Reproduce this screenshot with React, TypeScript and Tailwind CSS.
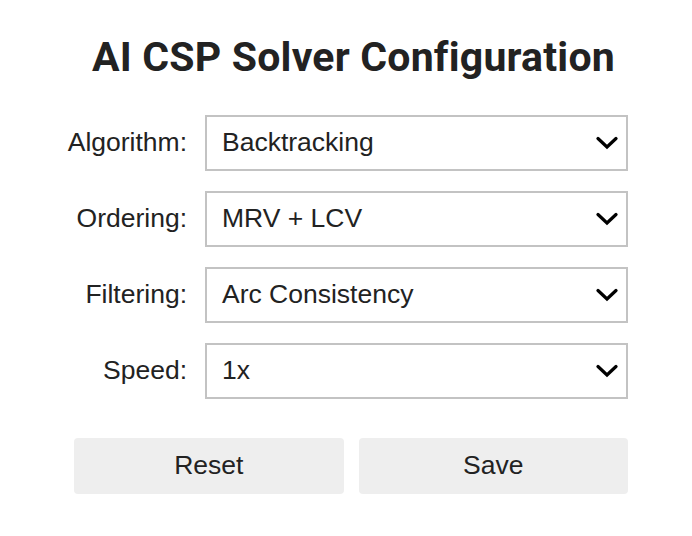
const fields = [
    { label: "Algorithm:", value: "Backtracking" },
    { label: "Ordering:", value: "MRV + LCV" },
    { label: "Filtering:", value: "Arc Consistency" },
    { label: "Speed:", value: "1x" },
];

function Chevron() {
    return (
        <svg width="22" height="14" viewBox="0 0 22 14" fill="none">
            <polyline points="2,2.5 11,11 20,2.5" stroke="#000" strokeWidth="3.2" strokeLinecap="round" strokeLinejoin="miter" />
        </svg>
    );
}

function SelectBox({ value }: { value: string }) {
    return (
        <div className="flex h-[56px] flex-1 items-center justify-between border-2 border-[#c3c3c3] bg-white pl-[15px] pr-[8px]">
            <span>{value}</span>
            <Chevron />
        </div>
    );
}

export default function App() {
    return (
        <div className="h-[536px] w-[692px] bg-white font-['Liberation_Sans',Arial,sans-serif] text-[#222]">
            <div className="ml-[63px] w-[565px] pt-[31px]">
                <h1 className="ml-[29px] font-['Roboto',sans-serif] text-[41px] leading-[52px] font-bold tracking-[0.2px] text-[#222]">
                    AI CSP Solver Configuration
                </h1>
                <div className="mt-[32px] flex flex-col gap-[20px] text-[26.5px]">
                    {fields.map((f) => (
                        <div key={f.label} className="flex items-center gap-[18px]">
                            <label className="w-[124px] text-right">{f.label}</label>
                            <SelectBox value={f.value} />
                        </div>
                    ))}
                </div>
                <div className="mt-[39px] ml-[11px] flex gap-[15px] text-[26.5px]">
                    <button className="h-[56px] flex-1 rounded-[4px] bg-[#eeeeee] text-[#222]">Reset</button>
                    <button className="h-[56px] flex-1 rounded-[4px] bg-[#eeeeee] text-[#222]">Save</button>
                </div>
            </div>
        </div>
    );
}
